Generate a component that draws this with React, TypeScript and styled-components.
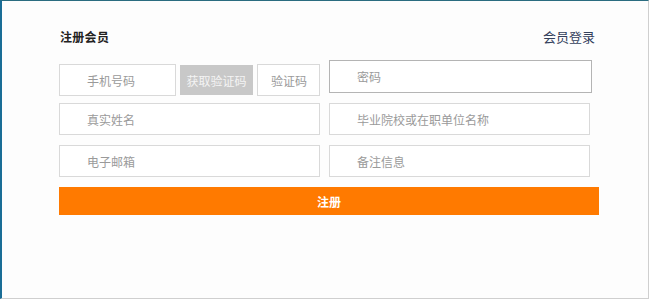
import React from "react";
import styled, { createGlobalStyle } from "styled-components";

const Global = createGlobalStyle`
  html, body { margin: 0; padding: 0; background: #fff; }
  body { font-family: "Noto Sans CJK SC", "Noto Sans", sans-serif; }
  * { box-sizing: border-box; }
`;

const Frame = styled.div`
  width: 649px;
  height: 299px;
  border-left: 2px solid #1a6d96;
  border-top: 1px solid #2a6c80;
  border-right: 1px solid #cfcfcf;
  border-bottom: 1px solid #cfcfcf;
  background: #fdfdfd;
  padding: 25px 0 0 57px;
`;

const Form = styled.div`
  width: 540px;
  display: flex;
  flex-direction: column;
`;

const Header = styled.div`
  display: flex;
  justify-content: space-between;
  align-items: center;
  height: 20px;
  margin-bottom: 18px;
`;

const Title = styled.h2`
  margin: 0;
  font-size: 12px;
  font-weight: 700;
  color: #222;
  letter-spacing: 0.3px;
  padding-left: 1px;
`;

const LoginLink = styled.a`
  font-size: 13px;
  color: #33405c;
  text-decoration: none;
  margin-right: 4px;
`;

const Row = styled.div<{ $gap?: number }>`
  display: flex;
  align-items: flex-start;
  margin-bottom: ${(p) => p.$gap ?? 10}px;
`;

const Group = styled.div`
  width: 261px;
  display: flex;
  gap: 4px;
  margin-right: 9px;
`;

const Field = styled.div<{ $w?: number; $focus?: boolean; $center?: boolean }>`
  width: ${(p) => (p.$w ? `${p.$w}px` : "261px")};
  height: ${(p) => (p.$focus ? 33 : 32)}px;
  margin-top: ${(p) => (p.$focus ? -4 : 0)}px;
  border: 1px solid ${(p) => (p.$focus ? "#b4b4b4" : "#d9d9d9")};
  background: #fff;
  display: flex;
  align-items: center;
  padding-left: ${(p) => (p.$center ? 13 : 27)}px;
  font-size: 12px;
  color: #9a9a9a;
  flex-shrink: 0;
`;

const CodeButton = styled.button`
  width: 73px;
  height: 30px;
  margin-top: 1px;
  border: none;
  background: #c8c8c8;
  color: #f4f4f4;
  font-family: inherit;
  font-size: 12px;
  padding: 0;
  flex-shrink: 0;
`;

const Submit = styled.button`
  width: 540px;
  height: 28px;
  border: none;
  background: #ff7a00;
  color: #fff;
  font-family: inherit;
  font-size: 12px;
  font-weight: 700;
  padding: 0;
`;

export default function App() {
  return (
    <>
      <Global />
      <Frame>
        <Form>
          <Header>
            <Title>注册会员</Title>
            <LoginLink href="#">会员登录</LoginLink>
          </Header>
          <Row $gap={7}>
            <Group>
              <Field $w={117}>手机号码</Field>
              <CodeButton>获取验证码</CodeButton>
              <Field $w={63} $center>验证码</Field>
            </Group>
            <Field $w={263} $focus>密码</Field>
          </Row>
          <Row $gap={10}>
            <Group>
              <Field>真实姓名</Field>
            </Group>
            <Field>毕业院校或在职单位名称</Field>
          </Row>
          <Row $gap={10}>
            <Group>
              <Field>电子邮箱</Field>
            </Group>
            <Field>备注信息</Field>
          </Row>
          <Submit>注册</Submit>
        </Form>
      </Frame>
    </>
  );
}
